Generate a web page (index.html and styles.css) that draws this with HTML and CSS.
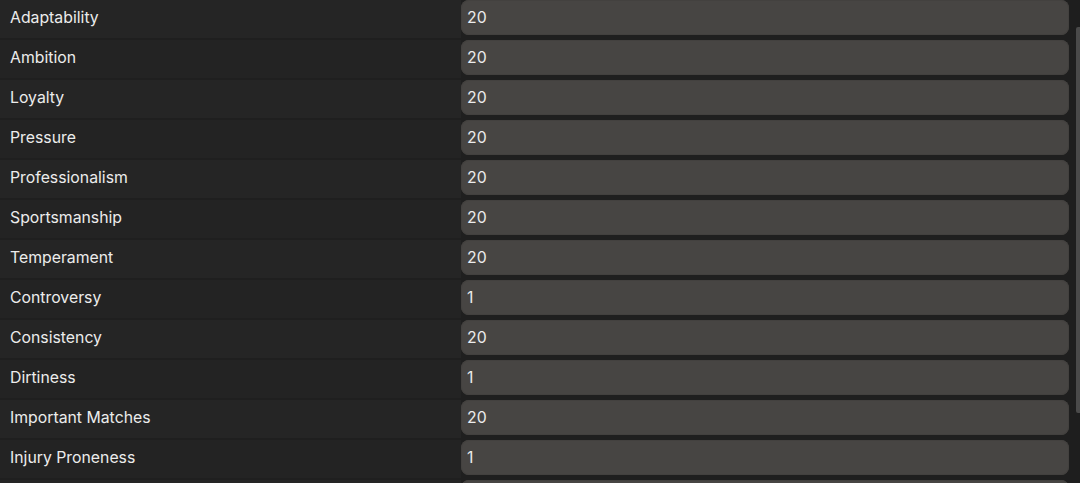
FILE: index.html
```html
<!DOCTYPE html>
<html>
<head>
<meta charset="utf-8">
<link rel="stylesheet" href="styles.css">
</head>
<body>
<div class="panel">
  <div class="list">
    <div class="row"><div class="label">Adaptability</div><div class="field">20</div></div>
    <div class="row"><div class="label">Ambition</div><div class="field">20</div></div>
    <div class="row"><div class="label">Loyalty</div><div class="field">20</div></div>
    <div class="row"><div class="label">Pressure</div><div class="field">20</div></div>
    <div class="row"><div class="label">Professionalism</div><div class="field">20</div></div>
    <div class="row"><div class="label">Sportsmanship</div><div class="field">20</div></div>
    <div class="row"><div class="label">Temperament</div><div class="field">20</div></div>
    <div class="row"><div class="label">Controversy</div><div class="field">1</div></div>
    <div class="row"><div class="label">Consistency</div><div class="field">20</div></div>
    <div class="row"><div class="label">Dirtiness</div><div class="field">1</div></div>
    <div class="row"><div class="label">Important Matches</div><div class="field">20</div></div>
    <div class="row"><div class="label">Injury Proneness</div><div class="field">1</div></div>
    <div class="row"><div class="label"></div><div class="field"></div></div>
  </div>
  <div class="scrollbar"><div class="thumb"></div></div>
</div>
</body>
</html>
```

FILE: styles.css
```css
html, body {
  margin: 0;
  padding: 0;
  background: #1f1f1f;
  overflow: hidden;
}
body {
  width: 1080px;
  height: 483px;
  font-family: Inter, "Noto Sans", sans-serif;
  color: #ececec;
}
.panel {
  display: flex;
  height: 483px;
  overflow: hidden;
}
.list {
  flex: 1;
  display: flex;
  flex-direction: column;
}
.row {
  display: flex;
  height: 40px;
  flex: 0 0 40px;
}
.label {
  width: 461px;
  height: 38px;
  box-sizing: border-box;
  padding-left: 10px;
  line-height: 35px;
  font-size: 15.8px;
  background: #252525;
}
.row:nth-child(even) .label {
  background: #232323;
}
.field {
  flex: 1;
  height: 35px;
  box-sizing: border-box;
  margin-right: 1px;
  padding-left: 6px;
  line-height: 35px;
  font-size: 15.8px;
  background: #474543;
  border-radius: 8px;
  box-shadow: inset 0 0 0 1px #43413f;
}
.scrollbar {
  width: 10px;
  position: relative;
  background: #1e1e1e;
}
.thumb {
  position: absolute;
  right: 0;
  top: 27px;
  width: 4px;
  height: 386px;
  background: #4a4a4a;
  border-radius: 2px 0 0 2px;
}
```
